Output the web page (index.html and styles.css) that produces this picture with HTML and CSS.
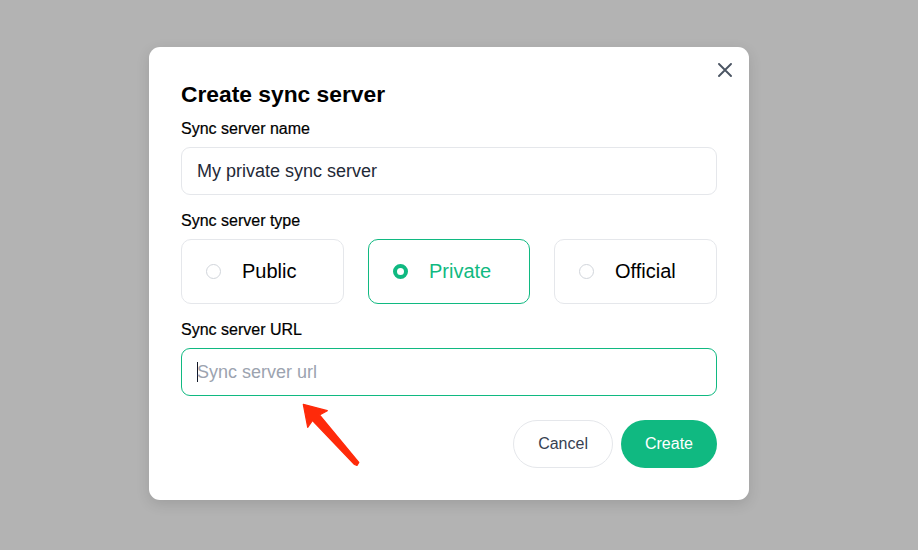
FILE: index.html
```html
<!DOCTYPE html>
<html lang="en">
<head>
<meta charset="utf-8">
<title>Create sync server</title>
<link rel="stylesheet" href="styles.css">
</head>
<body>
<div class="overlay">
  <div class="modal">
    <button class="close" aria-label="Close">
      <svg width="14" height="14" viewBox="0 0 14 14"><path d="M1 1L13 13M13 1L1 13" stroke="#4b5563" stroke-width="1.9" stroke-linecap="round" fill="none"/></svg>
    </button>
    <h1 class="title">Create sync server</h1>
    <div class="field field-first">
      <div class="label">Sync server name</div>
      <div class="input"><span class="value">My private sync server</span></div>
    </div>
    <div class="field">
      <div class="label">Sync server type</div>
      <div class="types">
        <div class="type"><span class="radio"></span><span class="type-name">Public</span></div>
        <div class="type selected"><span class="radio"></span><span class="type-name">Private</span></div>
        <div class="type"><span class="radio"></span><span class="type-name">Official</span></div>
      </div>
    </div>
    <div class="field">
      <div class="label">Sync server URL</div>
      <div class="input focused"><span class="caret"></span><span class="placeholder">Sync server url</span></div>
    </div>
    <div class="actions">
      <button class="btn btn-cancel">Cancel</button>
      <button class="btn btn-create">Create</button>
    </div>
    <svg class="arrow" width="600" height="452" viewBox="0 0 600 452">
      <polygon points="154.3,357.3 178.3,363.7 170.5,368 209.8,415.5 208,418.5 205.5,417.5 163.5,373.5 158.7,380.3" fill="#ff2a0a" stroke="#ff2a0a" stroke-width="1.2" stroke-linejoin="round"/>
    </svg>
  </div>
</div>
</body>
</html>
```
FILE: styles.css
```css
* { box-sizing: border-box; }
html, body { margin: 0; padding: 0; }
body {
  background: #b3b3b3;
  font-family: "Liberation Sans", Arial, sans-serif;
  color: #111;
}
.overlay {
  width: 918px;
  height: 550px;
  padding: 47px 0 0 149px;
}
.modal {
  position: relative;
  width: 600px;
  height: 453px;
  background: #fff;
  border-radius: 11px;
  padding: 31px 32px 32px;
  box-shadow: 0 4px 14px rgba(0,0,0,0.12);
}
.close {
  position: absolute;
  top: 16px;
  right: 17px;
  width: 14px;
  height: 14px;
  padding: 0;
  border: 0;
  background: none;
  display: block;
}
.close svg { display: block; }
.title {
  margin: 0;
  font-size: 22.8px;
  line-height: 32px;
  font-weight: 700;
  color: #000;
}
.field { margin-top: 14px; display: flex; flex-direction: column; gap: 6px; }
.field-first { margin-top: 7px; }
.label {
  font-size: 16px;
  line-height: 24px;
  color: #000;
  font-weight: 400;
  -webkit-text-stroke: 0.2px #000;
}
.input {
  height: 48px;
  border: 1px solid #e5e7eb;
  border-radius: 9px;
  display: flex;
  align-items: center;
  padding: 0 15px;
  font-size: 18px;
}
.input .value { color: #1f2937; }
.input.focused { border-color: #10b981; }
.placeholder { color: #9ca3af; }
.caret {
  width: 1px;
  height: 20px;
  background: #111827;
  margin-right: -1px;
}
.types {
  display: grid;
  grid-template-columns: 163px 162px 163px;
  gap: 24px;
}
.type {
  height: 65px;
  border: 1px solid #e5e7eb;
  border-radius: 10px;
  display: flex;
  align-items: center;
  padding-left: 24px;
  font-size: 20px;
  color: #000;
}
.radio {
  width: 15px;
  height: 15px;
  border-radius: 50%;
  border: 1.5px solid #d1d5db;
  margin-right: 21px;
  flex: none;
}
.type.selected { border-color: #10b981; color: #10b981; }
.type.selected .radio {
  border: 4.5px solid #10b981;
  background: #fff;
}
.actions {
  margin-top: 24px;
  display: flex;
  justify-content: flex-end;
  gap: 8px;
}
.btn {
  height: 48px;
  border-radius: 24px;
  padding: 0 24px;
  font-family: inherit;
  font-size: 16px;
}
.btn-cancel {
  background: #fff;
  border: 1px solid #e5e7eb;
  color: #374151;
}
.btn-create {
  background: #10b981;
  border: 0;
  color: #fff;
}
.arrow {
  position: absolute;
  left: 0;
  top: 0;
  pointer-events: none;
}
```
